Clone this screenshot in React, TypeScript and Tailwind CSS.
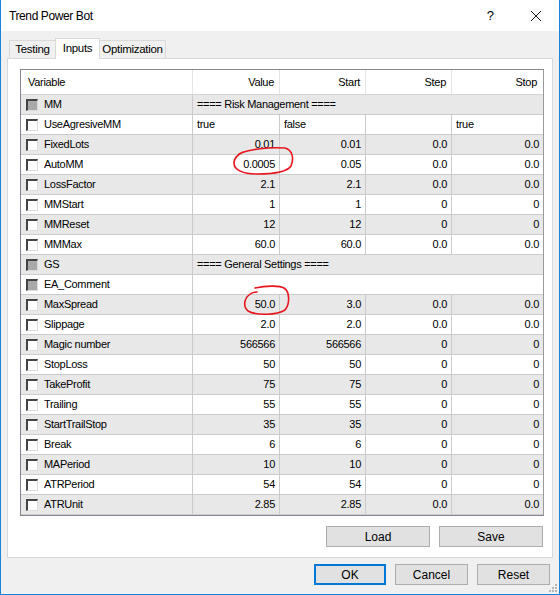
import React from "react";

type Row = {
  name: string;
  disabled?: boolean;
  sep?: string;
  left?: boolean;
  v?: string;
  s?: string;
  st?: string;
  sp?: string;
};

const rows: Row[] = [
  { name: "MM", disabled: true, sep: "==== Risk Management ====" },
  { name: "UseAgresiveMM", left: true, v: "true", s: "false", st: "", sp: "true" },
  { name: "FixedLots", v: "0.01", s: "0.01", st: "0.0", sp: "0.0" },
  { name: "AutoMM", v: "0.0005", s: "0.05", st: "0.0", sp: "0.0" },
  { name: "LossFactor", v: "2.1", s: "2.1", st: "0.0", sp: "0.0" },
  { name: "MMStart", v: "1", s: "1", st: "0", sp: "0" },
  { name: "MMReset", v: "12", s: "12", st: "0", sp: "0" },
  { name: "MMMax", v: "60.0", s: "60.0", st: "0.0", sp: "0.0" },
  { name: "GS", disabled: true, sep: "==== General Settings ====" },
  { name: "EA_Comment", disabled: true, sep: "" },
  { name: "MaxSpread", v: "50.0", s: "3.0", st: "0.0", sp: "0.0" },
  { name: "Slippage", v: "2.0", s: "2.0", st: "0.0", sp: "0.0" },
  { name: "Magic number", v: "566566", s: "566566", st: "0", sp: "0" },
  { name: "StopLoss", v: "50", s: "50", st: "0", sp: "0" },
  { name: "TakeProfit", v: "75", s: "75", st: "0", sp: "0" },
  { name: "Trailing", v: "55", s: "55", st: "0", sp: "0" },
  { name: "StartTrailStop", v: "35", s: "35", st: "0", sp: "0" },
  { name: "Break", v: "6", s: "6", st: "0", sp: "0" },
  { name: "MAPeriod", v: "10", s: "10", st: "0", sp: "0" },
  { name: "ATRPeriod", v: "54", s: "54", st: "0", sp: "0" },
  { name: "ATRUnit", v: "2.85", s: "2.85", st: "0.0", sp: "0.0" },
];

const cols = "grid grid-cols-[172px_87px_86px_86px_1fr]";

function Check({ disabled }: { disabled?: boolean }) {
  return (
    <div
      className={`w-[12px] h-[12px] border-t-2 border-l-2 border-t-[#444] border-l-[#444] border-r border-b border-r-[#dcdcdc] border-b-[#dcdcdc] ${
        disabled ? "bg-[#a9a9a9]" : "bg-white"
      }`}
    />
  );
}

function Cell({ text, left, last }: { text?: string; left?: boolean; last?: boolean }) {
  return (
    <div
      className={`flex items-center ${left ? "justify-start pl-[4px]" : "justify-end pr-[4px]"} ${
        last ? "" : "border-r border-[#cbcbcb]"
      }`}
    >
      {text}
    </div>
  );
}

function Btn({ label, w, focus }: { label: string; w: string; focus?: boolean }) {
  return (
    <div
      className={`${w} h-[21px] flex items-center justify-center bg-[#e1e1e1] text-[12px] text-black ${
        focus ? "border-2 border-[#0078d7]" : "border border-[#adadad]"
      }`}
    >
      {label}
    </div>
  );
}

export default function App() {
  return (
    <div
      className="relative w-[560px] h-[595px] bg-[#f0f0f0] border-x border-b border-[#1883d7] flex flex-col overflow-hidden"
      style={{ fontFamily: '"Liberation Sans", Arial, sans-serif' }}
    >
      {/* Title bar */}
      <div className="h-[31px] bg-white flex items-center pl-[8px] pr-[16px] shrink-0">
        <span className="text-[12px] tracking-[-0.4px] text-black flex-1">Trend Power Bot</span>
        <span className="text-[13px] text-black mr-[36px]">?</span>
        <svg width="12" height="12" viewBox="0 0 12 12" className="mr-[1px]">
          <path d="M1 1L11 11M11 1L1 11" stroke="#111" strokeWidth="1" />
        </svg>
      </div>

      {/* Tabs */}
      <div className="h-[27px] flex items-end pl-[8px] text-[11.5px] tracking-[-0.3px] text-black shrink-0">
        <div className="w-[46px] h-[18px] border-t border-l border-[#d9d9d9] flex items-center justify-center">
          Testing
        </div>
        <div className="w-[45px] h-[21px] -mb-px bg-white border-t border-x border-[#d9d9d9] flex items-center justify-center relative z-10">
          Inputs
        </div>
        <div className="w-[66px] h-[18px] border-t border-r border-[#d9d9d9] flex items-center justify-center">
          Optimization
        </div>
      </div>

      {/* Panel */}
      <div className="ml-[6px] w-[546px] h-[500px] bg-white border border-[#d9d9d9] pt-[10px] pl-[12px] pr-[8px] flex flex-col shrink-0">
        <div className="w-[524px] border border-[#828790] border-r-[#9a9a9a] text-[11px] tracking-[-0.3px] text-black">
          <div className={`${cols} h-[25px] border-b border-[#d5d5d5] bg-white`}>
            <div className="flex items-center pl-[7px] border-r border-[#e5e5e5]">Variable</div>
            <div className="flex items-center justify-end pr-[5px] border-r border-[#e5e5e5]">Value</div>
            <div className="flex items-center justify-end pr-[5px] border-r border-[#e5e5e5]">Start</div>
            <div className="flex items-center justify-end pr-[5px] border-r border-[#e5e5e5]">Step</div>
            <div className="flex items-center justify-end pr-[6px]">Stop</div>
          </div>
          {rows.map((r, i) => (
            <div
              key={r.name}
              className={`${cols} h-[20px] border-b border-[#cbcbcb] ${i % 2 === 0 ? "bg-[#e8e8e8]" : "bg-white"}`}
            >
              <div className="flex items-center gap-[6px] pl-[5px] border-r border-[#cbcbcb]">
                <Check disabled={r.disabled} />
                <span>{r.name}</span>
              </div>
              {r.sep !== undefined ? (
                <div className="col-span-4 flex items-center pl-[4px]">{r.sep}</div>
              ) : (
                <>
                  <Cell text={r.v} left={r.left} />
                  <Cell text={r.s} left={r.left} />
                  <Cell text={r.st} left={r.left} />
                  <Cell text={r.sp} left={r.left} last />
                </>
              )}
            </div>
          ))}
        </div>
        <div className="flex justify-end gap-[9px] mt-[10px] pr-[1px]">
          <Btn label="Load" w="w-[104px]" />
          <Btn label="Save" w="w-[104px]" />
        </div>
      </div>

      {/* Bottom buttons */}
      <div className="flex justify-end gap-[9px] mt-[6px] pr-[9px]">
        <Btn label="OK" w="w-[72px]" focus />
        <Btn label="Cancel" w="w-[73px]" />
        <Btn label="Reset" w="w-[73px]" />
      </div>

      {/* Resize grip */}
      <svg className="absolute right-[1px] bottom-[1px]" width="10" height="10" viewBox="0 0 10 10">
        {[
          [7, 1],
          [7, 4],
          [4, 4],
          [7, 7],
          [4, 7],
          [1, 7],
        ].map(([x, y]) => (
          <rect key={`${x}-${y}`} x={x} y={y} width="2" height="2" fill="#b8b8b8" />
        ))}
      </svg>

      {/* Hand-drawn red marks */}
      <svg className="absolute left-0 top-0 pointer-events-none" width="560" height="595" viewBox="0 0 560 595">
        <path
          d="M238 154 C248 149 268 147 284 148 C292 150 293 159 290 166 C286 172 272 174 256 174 C242 174 233 170 233 163 C233 158 236 155 242 152"
          fill="none"
          stroke="#e8141b"
          strokeWidth="1.6"
          strokeLinecap="round"
        />
        <path
          d="M254 288 C264 286 278 285 283 288 C289 292 289 304 284 310 C276 315 256 316 247 311 C242 307 243 299 248 295 C250 293 253 292 256 292"
          fill="none"
          stroke="#e8141b"
          strokeWidth="1.6"
          strokeLinecap="round"
        />
      </svg>
    </div>
  );
}
